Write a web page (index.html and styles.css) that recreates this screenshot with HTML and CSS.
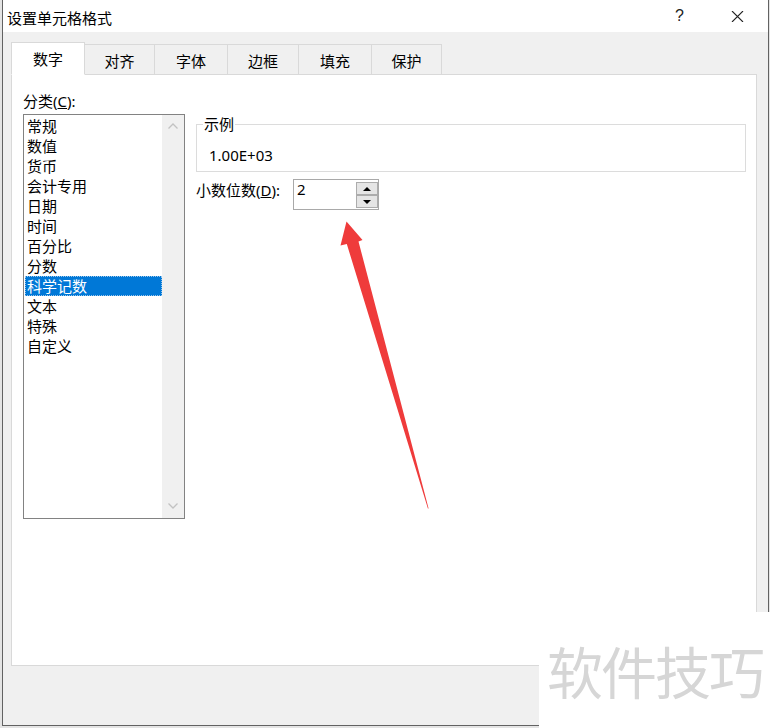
FILE: index.html
```html
<!DOCTYPE html>
<html lang="zh-CN">
<head>
<meta charset="utf-8">
<title>设置单元格格式</title>
<link rel="stylesheet" href="styles.css">
</head>
<body>
<div class="screen">
  <div class="dialog">
    <div class="titlebar">
      <span class="title">设置单元格格式</span>
      <span class="help">?</span>
      <svg class="close" viewBox="0 0 13 11" width="13" height="11"><path d="M1 0 L12 11 M12 0 L1 11" stroke="#222" stroke-width="1.1" fill="none"/></svg>
    </div>
    <div class="dlg-body">
      <div class="tabs">
        <div class="tab active t1">数字</div>
        <div class="tab t2">对齐</div>
        <div class="tab t3">字体</div>
        <div class="tab t4">边框</div>
        <div class="tab t5">填充</div>
        <div class="tab t6">保护</div>
      </div>
      <div class="panel">
        <div class="col-left">
          <div class="label">分类(<u>C</u>):</div>
          <div class="listbox">
            <ul class="items">
              <li>常规</li>
              <li>数值</li>
              <li>货币</li>
              <li>会计专用</li>
              <li>日期</li>
              <li>时间</li>
              <li>百分比</li>
              <li>分数</li>
              <li class="sel">科学记数</li>
              <li>文本</li>
              <li>特殊</li>
              <li>自定义</li>
            </ul>
            <div class="scrollbar">
              <svg class="chev" viewBox="0 0 10 6" width="10" height="6"><path d="M0.5 5.5 L5 1 L9.5 5.5" stroke="#c2c2c2" stroke-width="1.3" fill="none"/></svg>
              <svg class="chev" viewBox="0 0 10 6" width="10" height="6"><path d="M0.5 0.5 L5 5 L9.5 0.5" stroke="#c2c2c2" stroke-width="1.3" fill="none"/></svg>
            </div>
          </div>
        </div>
        <div class="col-right">
          <fieldset class="sample">
            <legend>示例</legend>
            <div class="sample-value">1.00E+03</div>
          </fieldset>
          <div class="decimals">
            <label class="dec-label">小数位数(<u>D</u>):</label>
            <div class="spin">
              <span class="spin-value">2</span>
              <div class="spin-btns">
                <div class="spin-btn"><span class="tri-up"></span></div>
                <div class="spin-btn"><span class="tri-down"></span></div>
              </div>
            </div>
          </div>
        </div>
      </div>
    </div>
  </div>
  <div class="watermark">软件技巧</div>
  <svg class="arrow" viewBox="0 0 770 728" width="770" height="728">
    <polygon points="346.5,221.5 362.5,240 358.5,241.5 428.6,508.5 427.9,508.5 346.8,244 340.5,245.5" fill="#ef3b3b"/>
  </svg>
</div>
</body>
</html>
```
FILE: styles.css
```css
body {
  margin: 0;
}

.screen {
  position: relative;
  width: 770px;
  height: 728px;
  background: #e4e4e4;
  overflow: hidden;
  font-family: "Noto Sans", "Noto Sans CJK SC", sans-serif;
  color: #000;
}

.dialog {
  margin-left: 2px;
  width: 767px;
  height: 726px;
  box-sizing: border-box;
  border: 1px solid #626262;
  border-top: none;
  background: #f0f0f0;
  display: flex;
  flex-direction: column;
}

.titlebar {
  height: 32px;
  flex: none;
  background: #fff;
  display: flex;
  align-items: center;
  padding: 0 24px 0 4px;
}

.title {
  flex: 1;
  font-size: 15px;
  line-height: 20px;
  margin-top: 3px;
}

.help {
  font-family: "Liberation Sans", sans-serif;
  font-size: 16px;
  color: #222;
  margin-right: 47px;
}

.close {
  display: block;
}

.dlg-body {
  padding: 10px 11px 0 8px;
}

.tabs {
  display: flex;
  align-items: flex-end;
  height: 33px;
  margin-bottom: -1px;
  position: relative;
  z-index: 1;
}

.tab {
  box-sizing: border-box;
  height: 31px;
  padding-top: 2px;
  margin-left: -1px;
  border: 1px solid #d9d9d9;
  background: #f0f0f0;
  font-size: 15px;
  line-height: 20px;
  display: flex;
  align-items: center;
  justify-content: center;
}

.tab.active {
  height: 33px;
  padding-top: 1px;
  margin-left: 0;
  background: #fff;
  border-bottom-color: #fff;
  position: relative;
  z-index: 2;
}

.t1 { width: 74px; }
.t2 { width: 71px; }
.t3 { width: 74px; }
.t4 { width: 72px; }
.t5 { width: 74px; }
.t6 { width: 71px; }

.panel {
  height: 592px;
  box-sizing: border-box;
  border: 1px solid #d9d9d9;
  background: #fff;
  display: flex;
  gap: 11px;
  padding: 16px 10px 0 11px;
}

.col-left {
  width: 162px;
  flex: none;
}

.label {
  font-size: 15px;
  line-height: 20px;
  height: 20px;
}

.listbox {
  margin-top: 3px;
  width: 162px;
  height: 405px;
  box-sizing: border-box;
  border: 1px solid #828282;
  display: flex;
}

.items {
  flex: 1;
  list-style: none;
  margin: 0;
  padding: 1px 0 0 1px;
}

.items li {
  font-size: 15px;
  line-height: 20px;
  height: 20px;
  padding-left: 2px;
  white-space: nowrap;
}

.items li.sel {
  background: #0078d7;
  color: #fff;
  outline: 1px dotted #9cc6ea;
  outline-offset: -1px;
}

.scrollbar {
  width: 22px;
  flex: none;
  background: #f0f0f0;
  box-sizing: border-box;
  padding: 8px 0 9px;
  display: flex;
  flex-direction: column;
  justify-content: space-between;
  align-items: center;
}

.chev {
  display: block;
}

.col-right {
  flex: 1;
  min-width: 0;
}

.sample {
  margin: 24px 0 0;
  padding: 0 6px 7px;
  border: 1px solid #dcdcdc;
  min-width: 0;
}

.sample legend {
  padding: 0 1px;
  font-size: 15px;
  line-height: 18px;
}

.sample-value {
  font-size: 15px;
  line-height: 18px;
  padding: 13px 0 0 6px;
}

.decimals {
  display: flex;
  margin-top: 7px;
}

.dec-label {
  width: 97px;
  flex: none;
  font-size: 15px;
  line-height: 20px;
  padding-top: 1px;
}

.spin {
  width: 86px;
  height: 31px;
  box-sizing: border-box;
  border: 1px solid #a9a9a9;
  background: #fff;
  display: flex;
}

.spin-value {
  flex: 1;
  padding: 0 0 0 3px;
  font-size: 15px;
  line-height: 18px;
}

.spin-btns {
  width: 22px;
  padding-top: 2px;
  display: flex;
  flex-direction: column;
}

.spin-btn {
  height: 13px;
  box-sizing: border-box;
  border: 1px solid #acacac;
  background: #e5e5e5;
  display: flex;
  align-items: center;
  justify-content: center;
}

.tri-up {
  width: 0;
  height: 0;
  border-left: 4px solid transparent;
  border-right: 4px solid transparent;
  border-bottom: 4px solid #000;
}

.tri-down {
  width: 0;
  height: 0;
  border-left: 4px solid transparent;
  border-right: 4px solid transparent;
  border-top: 4px solid #000;
}

.watermark {
  position: absolute;
  left: 539px;
  top: 612px;
  width: 231px;
  height: 116px;
  box-sizing: border-box;
  padding-left: 8px;
  background: #fff;
  font-family: "Noto Sans CJK SC", sans-serif;
  font-size: 56px;
  letter-spacing: -2px;
  line-height: 116px;
  color: #d6d6d6;
  white-space: nowrap;
}

.arrow {
  position: absolute;
  left: 0;
  top: 0;
  pointer-events: none;
}
```
